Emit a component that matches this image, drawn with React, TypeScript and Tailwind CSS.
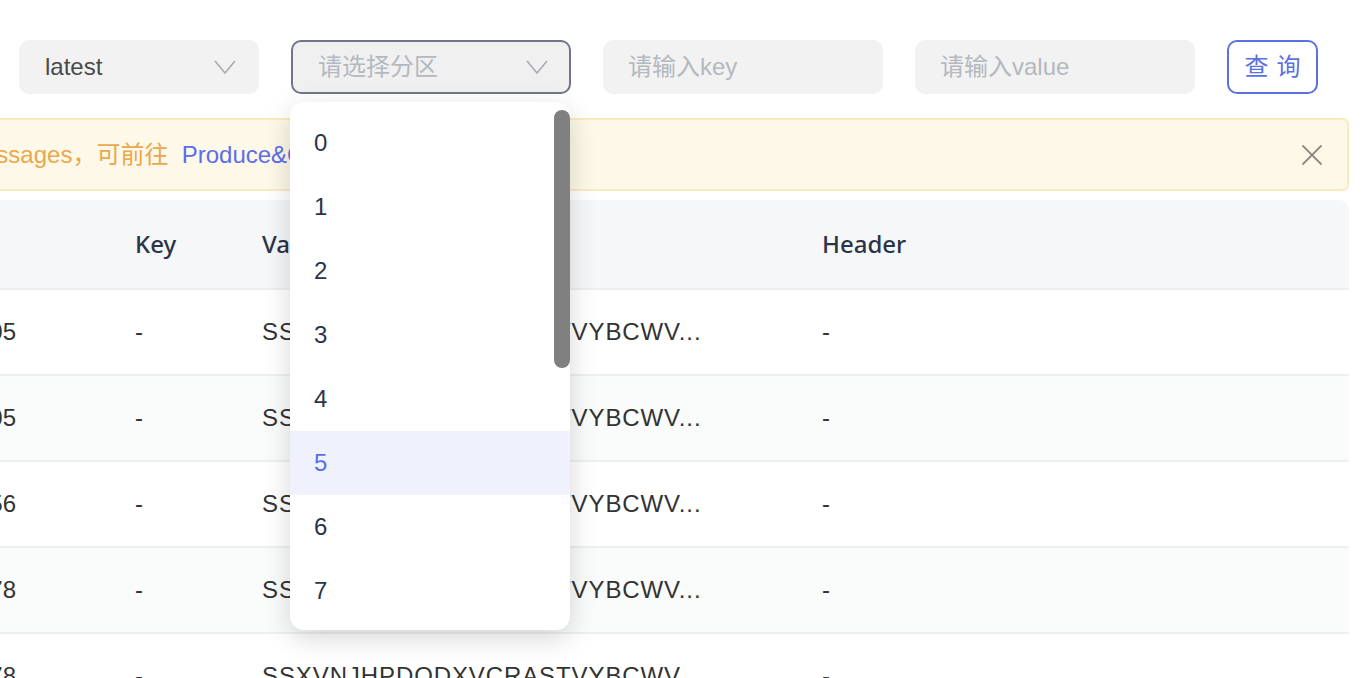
import { X } from 'lucide-react'

const rows = [
  { offset: '1675753843505', bg: 'bg-white' },
  { offset: '1675753843505', bg: 'bg-[#fafbfb]' },
  { offset: '1675753843556', bg: 'bg-white' },
  { offset: '1675753843578', bg: 'bg-[#fafbfb]' },
  { offset: '1675753843578', bg: 'bg-white' },
]

const partitions = ['0', '1', '2', '3', '4', '5', '6', '7', '8', '9']

function Chevron() {
  return (
    <svg width="22" height="14" viewBox="0 0 22 14" fill="none" className="shrink-0">
      <polyline points="1,1 11,13 21,1" stroke="#a9abb0" strokeWidth="1.6" fill="none" />
    </svg>
  )
}

export default function App() {
  return (
    <div
      className="relative w-[1364px] h-[678px] overflow-hidden bg-white text-[24px] text-[#333]"
      style={{ fontFamily: '"Liberation Sans", "Noto Sans CJK SC", sans-serif' }}
    >
      {/* filters */}
      <div className="flex items-center gap-[32px] pl-[19px] pt-[40px]">
        <div className="flex items-center justify-between w-[240px] h-[54px] rounded-[10px] bg-[#f2f2f2] pl-[26px] pr-[23px]">
          <span className="text-[#4a4a4a]">latest</span>
          <Chevron />
        </div>
        <div className="flex items-center justify-between w-[280px] h-[54px] rounded-[10px] bg-[#f0f0f0] border-2 border-[#70758a] pl-[25px] pr-[21px]">
          <span className="text-[#b4b8bf]">请选择分区</span>
          <Chevron />
        </div>
        <div className="flex items-center w-[280px] h-[54px] rounded-[10px] bg-[#f2f2f2] pl-[25px]">
          <span className="text-[#b4b8bf]">请输入key</span>
        </div>
        <div className="flex items-center w-[280px] h-[54px] rounded-[10px] bg-[#f2f2f2] pl-[25px]">
          <span className="text-[#b4b8bf]">请输入value</span>
        </div>
        <button className="w-[91px] h-[54px] rounded-[10px] border-2 border-[#5b70e3] bg-white text-[#5b70e3] tracking-[8px] pl-[8px]">
          查询
        </button>
      </div>

      <div className="pr-[15px]">
        {/* alert */}
        <div className="-ml-[20px] mt-[24px] flex items-center justify-between h-[73px] rounded-[6px] border-2 border-[#fbeac0] bg-[#fef8e8] pr-[17px]">
          <span className="pl-[20px] whitespace-nowrap">
            <span className="-ml-[39px] text-[#e8a84c]">messages，可前往&nbsp;&nbsp;</span>
            <span className="text-[#5b6ee8]">Produce&amp;Consume</span>
            <span className="text-[#e8a84c]"> 发送</span>
          </span>
          <X size={36} strokeWidth={1.2} color="#8a8a82" />
        </div>

        {/* table */}
        <div className="-ml-[20px] mt-[9px] rounded-tr-[10px] overflow-hidden">
          <div
            className="flex items-center h-[90px] bg-[#f6f7f9] border-b-2 border-[#eceef2] font-medium text-[#2c3447]"
            style={{ fontFamily: '"Noto Sans", "Noto Sans CJK SC", sans-serif' }}
          >
            <div className="w-[155px] shrink-0" />
            <div className="w-[127px] shrink-0">Key</div>
            <div className="w-[560px] shrink-0">Value</div>
            <div className="flex-1">Header</div>
          </div>
          {rows.map((r, i) => (
            <div key={i} className={`flex items-center h-[86px] border-b-2 border-[#eeeff1] ${r.bg}`}>
              <div className="w-[155px] shrink-0 flex justify-end overflow-hidden pr-[119px] whitespace-nowrap">
                <span>{r.offset}</span>
              </div>
              <div className="w-[127px] shrink-0">-</div>
              <div className="w-[560px] shrink-0 whitespace-nowrap tracking-[0.9px]">SSXVNJHPDQDXVCRASTVYBCWV...</div>
              <div className="flex-1">-</div>
            </div>
          ))}
        </div>
      </div>

      {/* partition dropdown */}
      <div className="absolute left-[290px] top-[102px] w-[280px] h-[528px] rounded-[14px] bg-white shadow-[0_8px_28px_rgba(0,0,0,0.16)] overflow-hidden">
        <div className="pt-[9px]">
          {partitions.slice(0, 8).map((p) => (
            <div
              key={p}
              className={`flex items-center h-[64px] pl-[24px] ${p === '5' ? 'bg-[#eff2fd] text-[#5b6ee8]' : 'text-[#2c3447]'}`}
            >
              {p}
            </div>
          ))}
        </div>
        <div className="absolute right-0 top-[8px] w-[16px] h-[258px] rounded-full bg-[#808080]" />
      </div>
    </div>
  )
}
